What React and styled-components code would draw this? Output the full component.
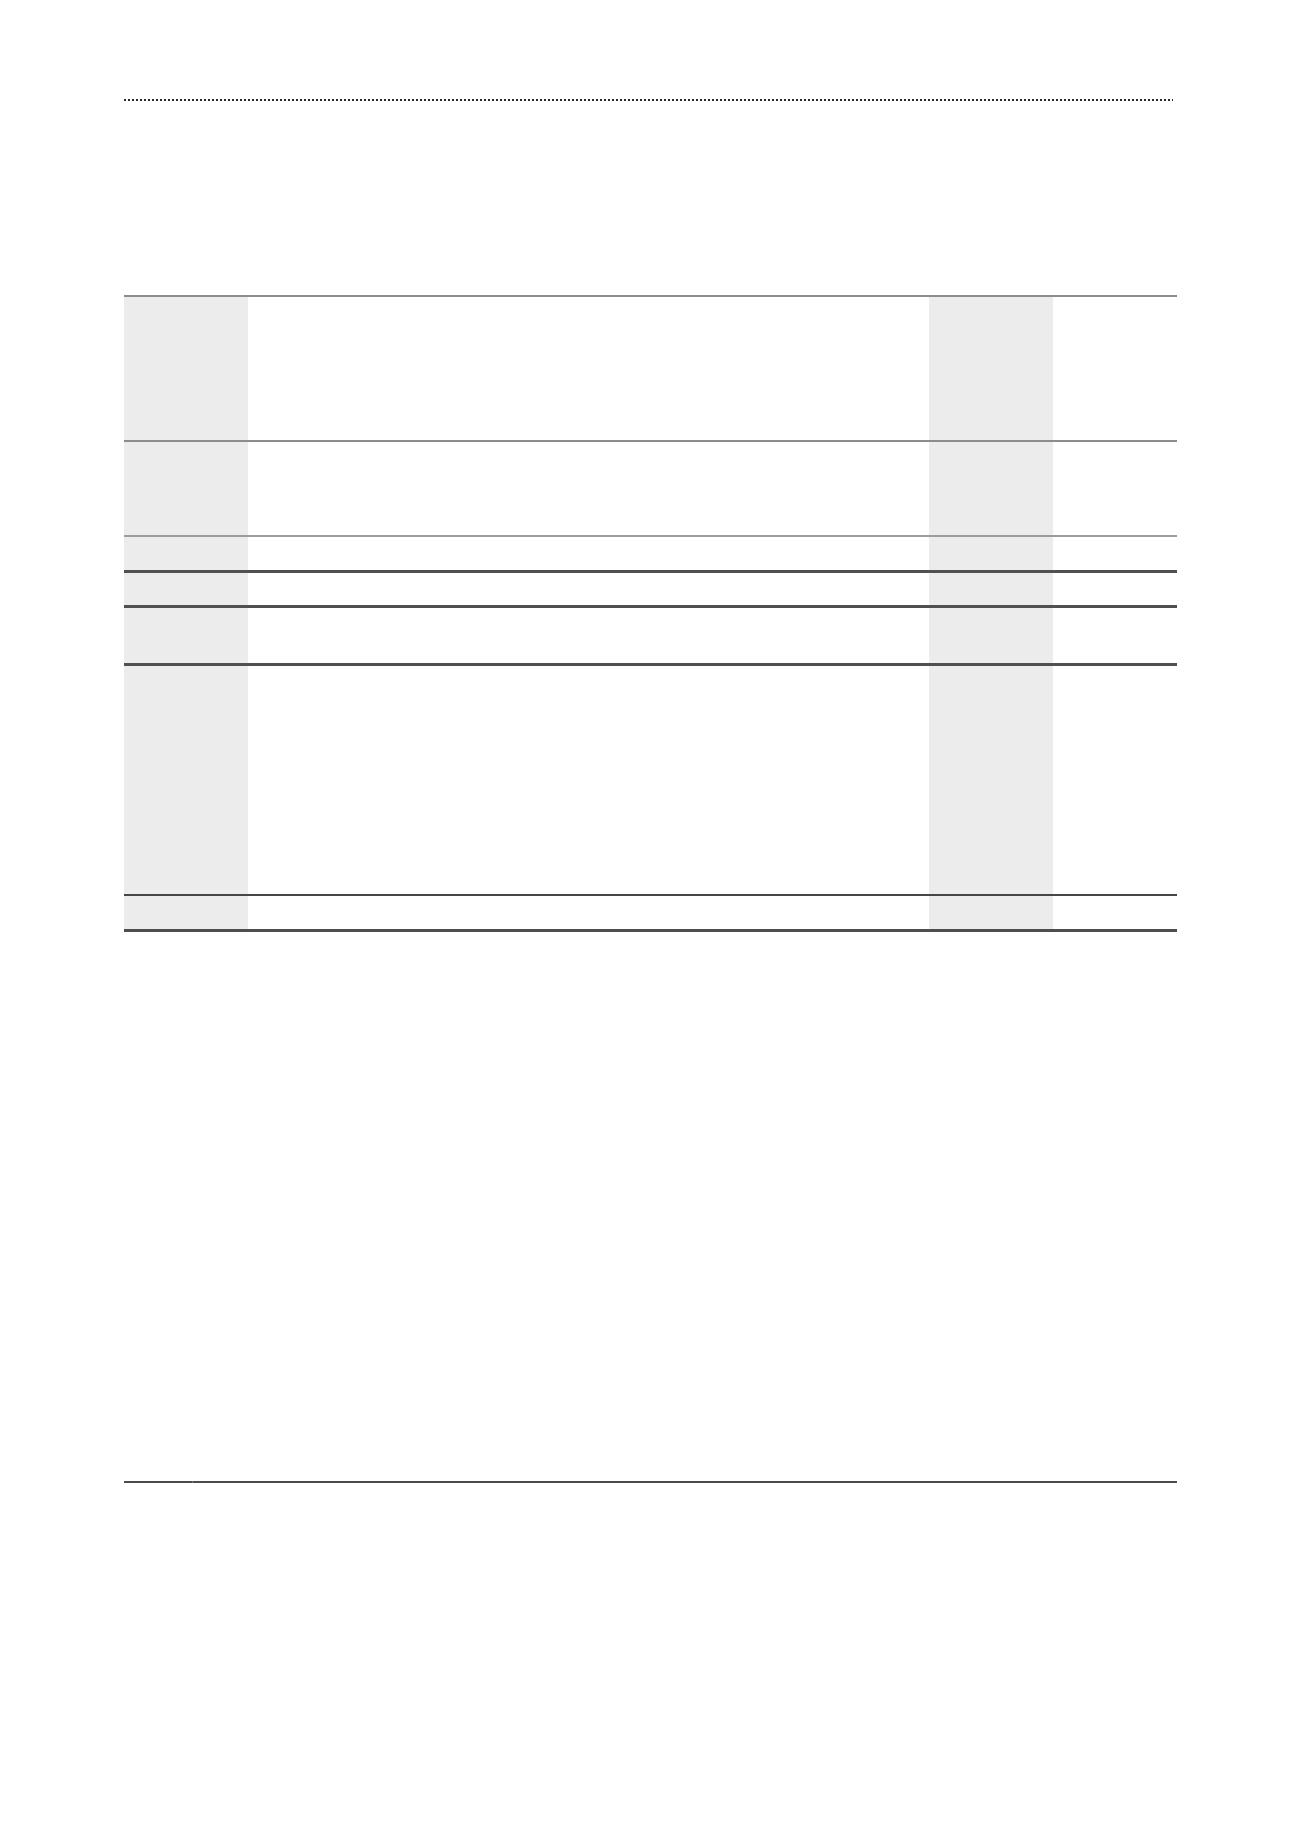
import React from "react";
import styled, { createGlobalStyle } from "styled-components";

const GlobalStyle = createGlobalStyle`
  html, body {
    margin: 0;
    padding: 0;
    background: #ffffff;
    font-family: "Liberation Sans", Arial, sans-serif;
  }
`;

const COLUMNS = "124px 124px 12px 68px 464px 13px 124px 124px";

const Page = styled.div`
  width: 1300px;
  min-height: 1839px;
  box-sizing: border-box;
  padding: 99px 0 0 124px;
`;

const DottedRule = styled.div`
  width: 1049px;
  height: 2px;
  background: repeating-linear-gradient(
    to right,
    #2a2a2a 0,
    #2a2a2a 2px,
    transparent 2px,
    transparent 4px
  );
`;

const Table = styled.div`
  margin-top: 194px;
  width: 1053px;
  display: flex;
  flex-direction: column;
  border-bottom: 3px solid #4e4e4e;
`;

const Row = styled.div`
  display: grid;
  grid-template-columns: ${COLUMNS};
  height: ${(p) => p.$h}px;
  box-sizing: border-box;
  border-top: ${(p) => p.$w}px solid ${(p) => p.$line};
`;

const Cell = styled.div`
  background: ${(p) => (p.$shade ? "#ececec" : "transparent")};
`;

const NoteRule = styled.div`
  margin-top: 549px;
  width: 1053px;
  display: grid;
  grid-template-columns: 68px 1fr;
  gap: 1px;
  background: #7a7a7a;
  height: 2px;
`;

const NoteSeg = styled.div`
  background: #4c4c4c;
`;

const rows = [
  { h: 145, w: 2, line: "#8c8c8c" },
  { h: 95, w: 2, line: "#8c8c8c" },
  { h: 35, w: 2, line: "#9c9c9c" },
  { h: 35, w: 3, line: "#505050" },
  { h: 58, w: 3, line: "#505050" },
  { h: 231, w: 3, line: "#505050" },
  { h: 35, w: 2, line: "#464646" },
];

const shaded = [true, false, false, false, false, false, true, false];

export default function App() {
  return (
    <>
      <GlobalStyle />
      <Page>
        <DottedRule />
        <Table>
          {rows.map((r, i) => (
            <Row key={i} $h={r.h} $w={r.w} $line={r.line}>
              {shaded.map((s, j) => (
                <Cell key={j} $shade={s} />
              ))}
            </Row>
          ))}
        </Table>
        <NoteRule>
          <NoteSeg />
          <NoteSeg />
        </NoteRule>
      </Page>
    </>
  );
}
